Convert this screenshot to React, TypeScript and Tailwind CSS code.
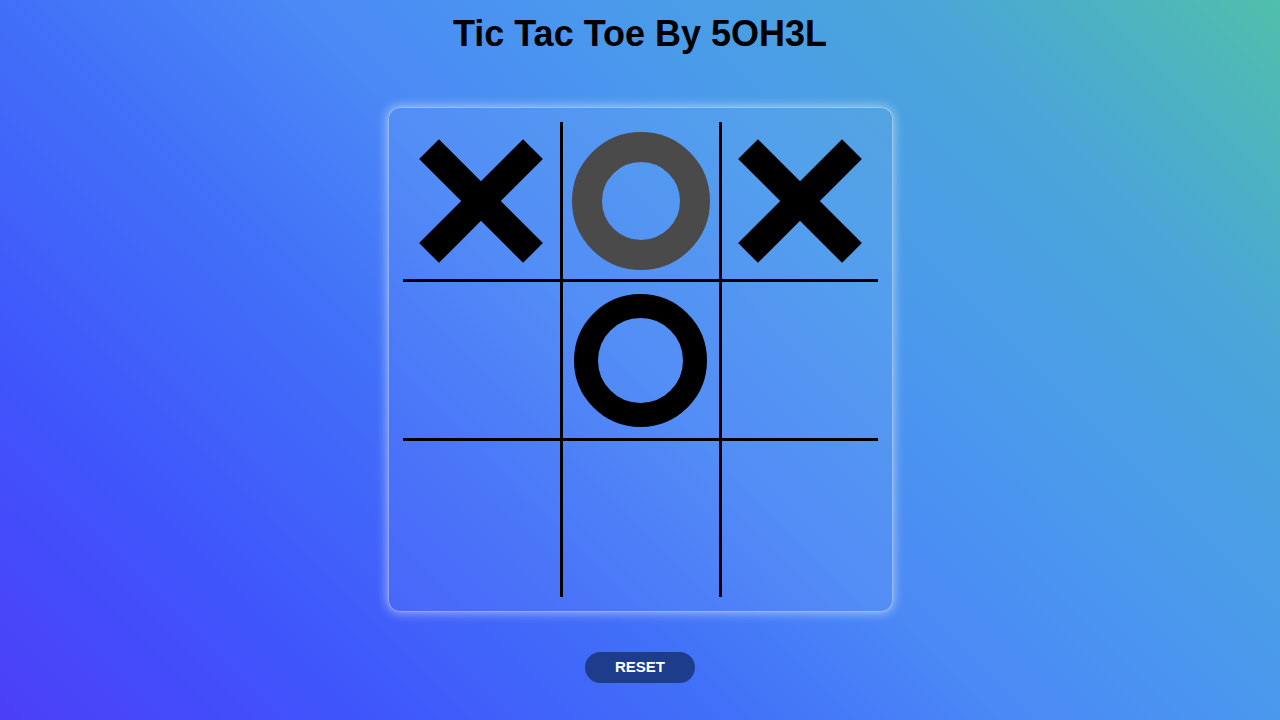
import React, { useState } from 'react';

type Mark = 'X' | 'O' | null;

const initialBoard: Mark[] = ['X', 'O', 'X', null, 'O', null, null, null, null];

// cells 0..8, borders only on the inner edges
const cellBorders = [
  'border-r-[3px] border-b-[3px]',
  'border-r-[3px] border-b-[3px]',
  'border-b-[3px]',
  'border-r-[3px] border-b-[3px]',
  'border-r-[3px] border-b-[3px]',
  'border-b-[3px]',
  'border-r-[3px]',
  'border-r-[3px]',
  '',
];

function XMark() {
  return (
    <svg width="124" height="124" viewBox="0 0 124 124">
      <rect x="-11.5" y="48" width="147" height="28" fill="#000" transform="rotate(45 62 62)" />
      <rect x="-11.5" y="48" width="147" height="28" fill="#000" transform="rotate(-45 62 62)" />
    </svg>
  );
}

function OMark({ active }: { active: boolean }) {
  if (active) {
    return <div className="w-[138px] h-[138px] rounded-full border-[30px] border-[#4a4a4a]" />;
  }
  return <div className="w-[133px] h-[133px] rounded-full border-[24px] border-black" />;
}

export default function App() {
  const [board, setBoard] = useState<Mark[]>(initialBoard);
  const [xNext, setXNext] = useState(true);

  const play = (i: number) => {
    if (board[i]) return;
    const next = [...board];
    next[i] = xNext ? 'X' : 'O';
    setBoard(next);
    setXNext(!xNext);
  };

  const reset = () => {
    setBoard(Array(9).fill(null));
    setXNext(true);
  };

  return (
    <div
      className="min-h-screen w-full flex flex-col items-center bg-[linear-gradient(45deg,#4b3ff8_0%,#3f55fb_18%,#416ff8_36%,#4a88f6_50%,#4a98ee_64%,#4aa6d8_82%,#50bfab_100%)]"
      style={{ fontFamily: '"Liberation Sans", Arial, sans-serif' }}
    >
      <h1 className="pt-[14px] text-[36px] leading-[40px] font-bold text-black">Tic Tac Toe By 5OH3L</h1>

      {/* Board */}
      <div className="mt-[53px] w-[505px] h-[505px] p-[14px] rounded-xl bg-white/5 border border-white/40 shadow-[0_0_12px_rgba(255,255,255,0.6)]">
        <div className="grid grid-cols-[160px_159px_156px] grid-rows-[160px_159px_156px]">
          {board.map((mark, i) => (
            <div
              key={i}
              onClick={() => play(i)}
              className={`flex items-center justify-center border-black cursor-pointer ${cellBorders[i]}`}
            >
              {mark === 'X' && <XMark />}
              {mark === 'O' && <OMark active={i === 1} />}
            </div>
          ))}
        </div>
      </div>

      <button
        onClick={reset}
        className="mt-10 w-[110px] h-[31px] rounded-full bg-[#1e3c8c] text-white text-[15px] font-bold"
      >
        RESET
      </button>
    </div>
  );
}
